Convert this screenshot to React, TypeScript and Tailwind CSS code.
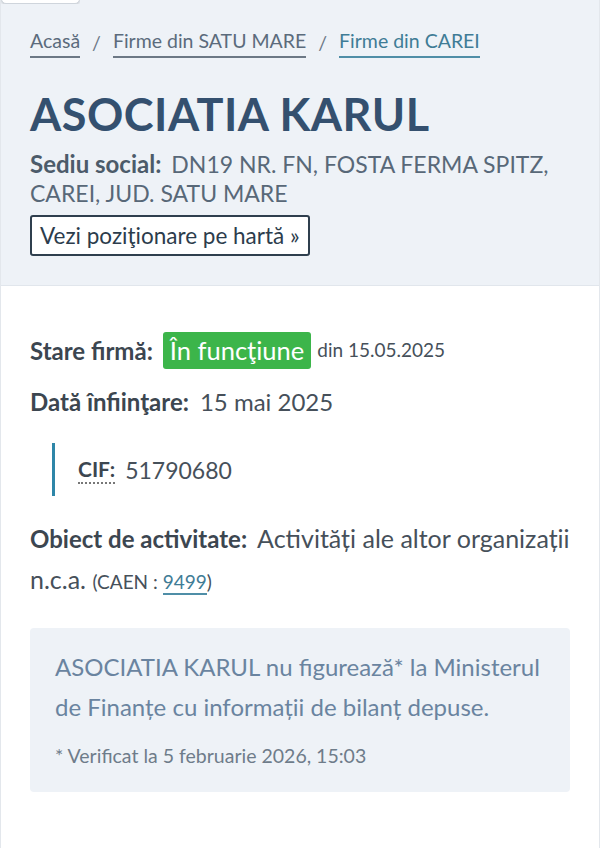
export default function App() {
  return (
    <div
      className="min-h-[848px] bg-white text-[#3f4a55]"
      style={{ fontFamily: "Lato, 'Noto Sans', sans-serif" }}
    >
      <div className="border-x border-[#e3e7ec] min-h-[848px]">
        {/* Header */}
        <div className="bg-[#eef2f7] border-b border-[#e1e6ec] px-[29px] pb-[29px]">
          <div className="-mx-[29px] h-[4px] w-[79px] overflow-hidden">
            <div className="-mt-[20px] h-[24px] rounded-b-[5px] border border-[#cfd5dc] bg-white shadow-sm" />
          </div>
          <nav className="mt-[23px] flex items-center text-[19.5px] leading-[28px]">
            <a className="border-b-2 border-[#6c7885] pb-[1px] text-[#5b6b7c]">Acasă</a>
            <span className="mx-[12px] text-[#6b7785]">/</span>
            <a className="border-b-2 border-[#6c7885] pb-[1px] text-[#5b6b7c]">Firme din SATU MARE</a>
            <span className="mx-[12px] text-[#6b7785]">/</span>
            <a className="border-b-2 border-[#4f8ea7] pb-[1px] text-[#3f7c96]">Firme din CAREI</a>
          </nav>
          <h1 className="mt-[29px] text-[45px] leading-[54px] font-bold tracking-[0.5px] text-[#34506f]">
            ASOCIATIA KARUL
          </h1>
          <p className="mt-[8px] text-[23px] leading-[29px] text-[#586878]">
            <span className="mr-[10px] text-[24px] font-bold text-[#4c5b6a]">Sediu social:</span>
            DN19 NR. FN, FOSTA FERMA SPITZ, CAREI, JUD. SATU MARE
          </p>
          <button className="mt-[7px] rounded-[3px] border-2 border-[#2f3f4e] bg-white px-[8px] py-[4px] text-[22.5px] leading-[29px] text-[#2c3c4c]">
            Vezi poziţionare pe hartă »
          </button>
        </div>

        {/* Body */}
        <div className="px-[29px] pt-[46px]">
          <div className="flex items-center">
            <span className="text-[24px] font-bold text-[#3c4650]">Stare firmă:</span>
            <span className="ml-[10px] rounded-[3px] bg-[#3cb54a] px-[7px] py-[2px] text-[25.5px] leading-[33px] text-white">
              În funcţiune
            </span>
            <span className="ml-[6px] text-[19px] text-[#46505a]">din 15.05.2025</span>
          </div>
          <div className="mt-[17px] flex items-center leading-[32px]">
            <span className="text-[24px] font-bold text-[#3c4650]">Dată înfiinţare:</span>
            <span className="ml-[11px] text-[24px] text-[#46505a]">15 mai 2025</span>
          </div>

          <div className="ml-[22px] mt-[25px] border-l-[3px] border-[#2e86a8] pl-[23px] py-[12px]">
            <div className="flex h-[29px] items-center">
              <span className="border-b-2 border-dotted border-[#777] text-[21px] font-bold leading-[26px] text-[#3c4650]">
                CIF:
              </span>
              <span className="ml-[10px] text-[23px] leading-[26px] text-[#46505a]">51790680</span>
            </div>
          </div>

          <p className="mt-[22px] text-[25px] leading-[41px] text-[#46505a]">
            <span className="mr-[10px] text-[24px] font-bold text-[#3c4650]">Obiect de activitate:</span>
            Activități ale altor organizații n.c.a.{" "}
            <span className="text-[19px]">
              (CAEN :{" "}
              <a className="border-b-2 border-[#4f8ea7] text-[#3f7c96]">9499</a>)
            </span>
          </p>

          <div className="mt-[26px] rounded-[4px] bg-[#eef2f7] pl-[25px] pr-[20px] pt-[19px] pb-[24px]">
            <p className="text-[24px] leading-[40px] text-[#6a84a0]">
              ASOCIATIA KARUL nu figurează* la Ministerul de Finanțe cu informații de bilanț depuse.
            </p>
            <p className="mt-[17px] text-[19.5px] leading-[24px] text-[#6e7c8a]">
              * Verificat la 5 februarie 2026, 15:03
            </p>
          </div>
        </div>
      </div>
    </div>
  );
}
